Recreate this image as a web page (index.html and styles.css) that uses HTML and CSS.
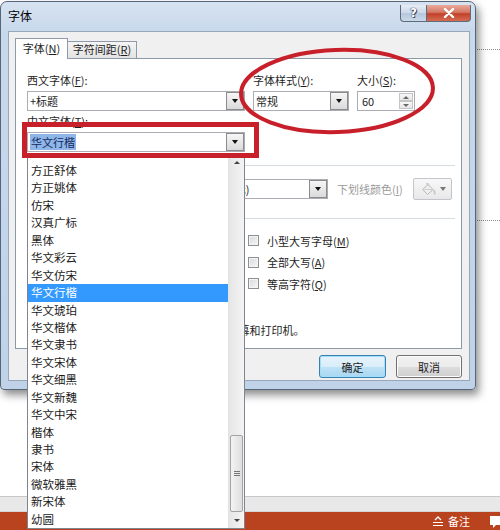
FILE: index.html
```html
<!DOCTYPE html>
<html lang="zh-CN">
<head>
<meta charset="utf-8">
<title>字体</title>
<link rel="stylesheet" href="styles.css">
</head>
<body>
<div class="screen">
  <div class="workspace"><div class="placeholder"></div></div>
  <div class="hscroll"></div>
  <div class="statusbar">
    <svg class="notes-icon" width="10" height="11" viewBox="0 0 10 11"><path d="M2 4 L5 1 L8 4" fill="none" stroke="#fff" stroke-width="1.3"/><path d="M0 6.5 H10 M0 9.5 H10" stroke="#fff" stroke-width="1.2"/></svg>
    <span class="notes-label">备注</span>
    <svg class="comment-icon" width="16" height="13" viewBox="0 0 16 13"><path d="M0 0 H16 V9 H6 L3 12 V9 H0 Z" fill="#fff"/></svg>
  </div>
</div>

<div class="dialog">
  <div class="titlebar">
    <span class="title">字体</span>
    <div class="caption-btns">
      <div class="cap help">?</div>
      <div class="cap close"><svg width="12" height="10" viewBox="0 0 12 10"><path d="M2 1 L10 9 M10 1 L2 9" stroke="#fff" stroke-width="2.4" stroke-linecap="round"/></svg></div>
    </div>
  </div>
  <div class="client">
    <div class="tabs">
      <div class="tab active">字体(<u>N</u>)</div>
      <div class="tab">字符间距(<u>R</u>)</div>
    </div>
    <div class="panel">
      <div class="fontgrid">
        <div class="lbl">西文字体(<u>F</u>):</div>
        <div class="lbl">字体样式(<u>Y</u>):</div>
        <div class="lbl">大小(<u>S</u>):</div>
        <div class="combo"><span class="val">+标题</span><span class="drop"><i class="arrow"></i></span></div>
        <div class="combo"><span class="val">常规</span><span class="drop"><i class="arrow"></i></span></div>
        <div class="combo spin"><span class="val">60</span><span class="spinbtns"><span class="sb"><i class="arrow up"></i></span><span class="sb"><i class="arrow"></i></span></span></div>
      </div>
      <div class="cjk-block">
        <div class="lbl">中文字体(<u>T</u>):</div>
        <div class="combo wide"><span class="val"><span class="hl">华文行楷</span></span><span class="drop"><i class="arrow"></i></span></div>
      </div>

      <div class="group-head"></div>
      <div class="textrow">
        <span></span>
        <span></span>
        <span></span>
        <div class="combo"><span class="val">(无)</span><span class="drop"><i class="arrow"></i></span></div>
        <span class="disabled pad">下划线颜色(<u>I</u>)</span>
        <div class="colorbtn off">
          <svg width="17" height="13" viewBox="0 0 17 13"><path d="M2.5 6.5 L8 1.5 L13 6.5 L7.5 11.5 Z" fill="#eeeeee" stroke="#b8b8b8"/><path d="M4 6.5 H12" stroke="#cfcfcf"/><path d="M13.5 7 Q15.5 9 14.5 11.5" fill="none" stroke="#c8c8c8" stroke-width="1.6"/><path d="M6 1 Q8 -0.5 9.5 2" fill="none" stroke="#bdbdbd"/></svg>
          <i class="arrow grey"></i>
        </div>
      </div>

      <div class="group-head effects"></div>
      <div class="effects-grid">
        <div class="col spacer"></div>
        <div class="col">
          <label class="chk"><span class="box"></span>小型大写字母(<u>M</u>)</label>
          <label class="chk"><span class="box"></span>全部大写(<u>A</u>)</label>
          <label class="chk"><span class="box"></span>等高字符(<u>Q</u>)</label>
        </div>
      </div>
      <div class="note">这是一种 TrueType 字体，同时适用于屏幕和打印机。</div>
    </div>
    <div class="actions">
      <div class="btn default">确定</div>
      <div class="btn">取消</div>
    </div>
  </div>
</div>

<div class="dropdown">
  <div class="items">
    <div class="item">方正舒体</div>
    <div class="item">方正姚体</div>
    <div class="item">仿宋</div>
    <div class="item">汉真广标</div>
    <div class="item">黑体</div>
    <div class="item">华文彩云</div>
    <div class="item">华文仿宋</div>
    <div class="item sel">华文行楷</div>
    <div class="item">华文琥珀</div>
    <div class="item">华文楷体</div>
    <div class="item">华文隶书</div>
    <div class="item">华文宋体</div>
    <div class="item">华文细黑</div>
    <div class="item">华文新魏</div>
    <div class="item">华文中宋</div>
    <div class="item">楷体</div>
    <div class="item">隶书</div>
    <div class="item">宋体</div>
    <div class="item">微软雅黑</div>
    <div class="item">新宋体</div>
    <div class="item">幼圆</div>
  </div>
  <div class="vscroll">
    <div class="sbtn"><i class="tri up"></i></div>
    <div class="track"><div class="thumb"><span class="grip"></span></div></div>
    <div class="sbtn"><i class="tri"></i></div>
  </div>
</div>

<svg class="annot" width="500" height="530" viewBox="0 0 500 530">
  <rect x="24.5" y="124.5" width="232" height="31" fill="none" stroke="#c8202b" stroke-width="5"/>
  <ellipse cx="337" cy="91" rx="96" ry="41" fill="none" stroke="#c8202b" stroke-width="4" transform="rotate(-2 337 91)"/>
</svg>
</body>
</html>
```

FILE: styles.css
```css
* { box-sizing: border-box; }
html, body { margin: 0; padding: 0; }
body {
  width: 500px;
  height: 530px;
  overflow: hidden;
  position: relative;
  background: #fff;
  font-family: "Noto Sans CJK SC", "Microsoft YaHei", sans-serif;
  font-size: 11px;
  color: #1e1e1e;
}
u { text-decoration: underline; text-underline-offset: 1px; }

/* background application */
.screen { display: flex; flex-direction: column; height: 530px; }
.workspace { flex: 1; background: #fff; padding: 49px 0 0 477px; }
.placeholder { height: 172px; border-top: 1px dotted #8c8c8c; border-bottom: 1px dotted #8c8c8c; }
.hscroll { height: 16px; background: #e8e8e8; border-top: 1px solid #c8c8c8; border-bottom: 1px solid #d6d6d6; }
.statusbar {
  height: 18px;
  background: #b9431f;
  color: #fff;
  display: flex;
  align-items: center;
  justify-content: flex-end;
}
.notes-icon { margin-right: 5px; }
.notes-label { font-size: 11px; line-height: 18px; margin-right: 20px; }
.comment-icon { margin-right: -6px; margin-top: 2px; }

/* dialog window */
.dialog {
  position: absolute;
  left: 0;
  top: 1px;
  width: 476px;
  height: 389px;
  border: 1px solid #56667a;
  border-radius: 7px 7px 4px 4px;
  background: linear-gradient(180deg, #d6e2f0 0px, #c9d9ec 28px, #bfd2e8 100%);
  box-shadow: 3px 5px 9px rgba(0, 0, 0, 0.45);
  display: flex;
  flex-direction: column;
}
.titlebar { height: 29px; display: flex; align-items: flex-start; padding-left: 7px; }
.title { font-size: 12px; line-height: 28px; color: #000; }
.caption-btns { margin-left: auto; margin-right: 4px; margin-top: 3px; display: flex; }
.cap {
  height: 17px;
  display: flex;
  align-items: center;
  justify-content: center;
  border: 1px solid #5e6b7c;
  border-top: none;
}
.help {
  width: 26px;
  border-radius: 0 0 0 4px;
  border-right: none;
  background: linear-gradient(180deg, #e4ecf6 0%, #ccd9e8 50%, #b6c8dd 51%, #c9d8ea 100%);
  color: #fff;
  font-weight: bold;
  font-size: 12px;
  font-family: "DejaVu Sans", sans-serif;
  text-shadow: 0 0 1px #334, 0 0 1px #334, 1px 1px 0 #556;
}
.close {
  width: 45px;
  border-radius: 0 0 4px 0;
  background: linear-gradient(180deg, #e9a99b 0%, #d47a66 45%, #c2412a 55%, #d56c52 100%);
}

.client {
  height: 350px;
  margin: 0 5px 0 7px;
  background: #f0f0f0;
  border: 1px solid #97a7b9;
  padding: 6px 7px 2px 6px;
  display: flex;
  flex-direction: column;
}
.tabs { height: 20px; display: flex; align-items: flex-end; }
.tab {
  height: 17px;
  width: 70px;
  text-align: center;
  line-height: 15px;
  border: 1px solid #8e9aaa;
  border-bottom: none;
  background: linear-gradient(180deg, #f5f5f5, #e3e3e3);
}
.tab.active {
  width: 53px;
  height: 21px;
  line-height: 19px;
  background: #fff;
  margin-bottom: -1px;
  margin-right: -1px;
  position: relative;
  z-index: 1;
}
.panel {
  height: 291px;
  background: #fff;
  border: 1px solid #8c99a8;
  padding: 13px 6px 0 11px;
}

.lbl { line-height: 16px; height: 16px; white-space: nowrap; }
.fontgrid {
  display: grid;
  grid-template-columns: 218px 96px 58px;
  column-gap: 8px;
  row-gap: 3px;
}
.combo {
  height: 20px;
  border: 1px solid #abadb3;
  background: #fff;
  display: flex;
  align-items: stretch;
}
.combo .val { flex: 1; padding-left: 2px; line-height: 18px; white-space: nowrap; overflow: hidden; }
.combo .drop {
  width: 18px;
  border: 1px solid #8b8b8b;
  background: linear-gradient(180deg, #f6f6f6, #dadada);
  display: flex;
  align-items: center;
  justify-content: center;
}
.arrow {
  display: block;
  width: 0;
  height: 0;
  border-left: 3.5px solid transparent;
  border-right: 3.5px solid transparent;
  border-top: 4px solid #111;
}
.arrow.up { border-top: none; border-bottom: 3px solid #6a6a6a; }
.arrow.grey { border-top-color: #777; }
.spin .val { padding-left: 4px; }
.spinbtns { width: 14px; display: flex; flex-direction: column; margin: 1px; }
.sb {
  flex: 1;
  border: 1px solid #c5c5c5;
  background: linear-gradient(180deg, #f7f7f7, #e6e6e6);
  display: flex;
  align-items: center;
  justify-content: center;
}
.sb .arrow { border-left-width: 3px; border-right-width: 3px; border-top-width: 3px; border-top-color: #6a6a6a; }

.cjk-block { margin-top: 2px; display: flex; flex-direction: column; gap: 3px; }
.combo.wide { width: 218px; }
.hl { background: #8fb6e8; color: #152a60; padding: 0 1px; }

.group-head { display: flex; align-items: center; height: 16px; margin-top: 5px; }
.group-head::after { content: ""; flex: 1; border-top: 1px solid #d5dce3; }
.group-head.effects { margin-top: 10px; }

.textrow {
  margin-top: 5px;
  height: 22px;
  display: grid;
  grid-template-columns: 58px 40px 91px 100px 77px 39px;
  column-gap: 4px;
  align-items: center;
  white-space: nowrap;
}
.textrow .combo { height: 20px; }
.disabled { color: #9b9b9b; }
.pad { padding-left: 5px; }
.colorbtn {
  height: 22px;
  border: 1px solid #a6abb0;
  border-radius: 2px;
  background: linear-gradient(180deg, #f8f8f8, #e8e8e8);
  display: flex;
  align-items: center;
  justify-content: center;
  gap: 3px;
}
.colorbtn.off { border-color: #c2c6ca; }

.effects-grid { margin-top: 4px; display: grid; grid-template-columns: 221px 1fr; }
.col { display: flex; flex-direction: column; }
.col.spacer { height: 86px; }
.chk { height: 21.5px; display: flex; align-items: center; white-space: nowrap; }
.chk .box {
  width: 11px;
  height: 11px;
  margin: 0 8px 0 0;
  border: 1px solid #8e8f8f;
  background: linear-gradient(135deg, #d9d9d9, #f7f7f7);
  box-shadow: inset 0 0 0 1px #f4f4f4;
}
.note { margin-top: 6px; line-height: 16px; padding-left: 16px; white-space: nowrap; }

.actions { margin-top: 6px; display: flex; justify-content: flex-end; gap: 10px; }
.btn {
  width: 66px;
  height: 23px;
  border: 1px solid #707070;
  border-radius: 3px;
  background: linear-gradient(180deg, #f2f2f2 0%, #ebebeb 50%, #dddddd 51%, #cfcfcf 100%);
  box-shadow: inset 0 0 0 1px #fcfcfc;
  display: flex;
  align-items: center;
  justify-content: center;
  line-height: 20px;
}
.btn.default {
  width: 67px;
  border-color: #3c7fb1;
  background: linear-gradient(180deg, #e8f3fa 0%, #d9edf9 50%, #bfe2f6 51%, #a9d7f2 100%);
  box-shadow: inset 0 0 0 1px #9fe0fb;
}

/* open drop-down list */
.dropdown {
  position: absolute;
  left: 27px;
  top: 153px;
  width: 218px;
  height: 376px;
  border: 1px solid #7e858e;
  background: #fff;
  display: flex;
  z-index: 5;
}
.items { flex: 1; padding-top: 8px; overflow: hidden; }
.item {
  height: 17.45px;
  line-height: 17.45px;
  padding-left: 3px;
  font-size: 11.5px;
  color: #1a1a1a;
  white-space: nowrap;
}
.item.sel { background: #3399ff; color: #fff; }
.vscroll {
  width: 16px;
  display: flex;
  flex-direction: column;
  background: linear-gradient(90deg, #e6e6e6, #f4f4f4);
  border-left: 1px solid #e2e2e2;
}
.sbtn { height: 16px; display: flex; align-items: center; justify-content: center; }
.tri {
  display: block;
  width: 0;
  height: 0;
  border-left: 3px solid transparent;
  border-right: 3px solid transparent;
  border-top: 3px solid #444;
}
.tri.up { border-top: none; border-bottom: 3px solid #444; }
.track { flex: 1; padding-top: 265px; }
.thumb {
  height: 77px;
  margin: 0 1px;
  border: 1px solid #a3a3a3;
  border-radius: 2px;
  background: linear-gradient(90deg, #f3f3f3, #dedede);
  display: flex;
  align-items: center;
  justify-content: center;
}
.grip {
  width: 6px;
  height: 5px;
  border-top: 1px solid #777;
  border-bottom: 1px solid #777;
  position: relative;
}
.grip::after { content: ""; position: absolute; left: 0; right: 0; top: 1px; border-top: 1px solid #777; }

.annot { position: absolute; left: 0; top: 0; z-index: 10; pointer-events: none; }
```
